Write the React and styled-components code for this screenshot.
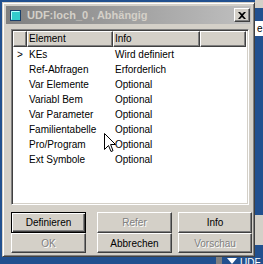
import React from 'react';
import styled, { createGlobalStyle } from 'styled-components';

const Global = createGlobalStyle`
  html, body { margin: 0; padding: 0; }
  body {
    width: 263px; height: 264px; overflow: hidden;
    background: #21508f;
    font-family: "Liberation Sans", Arial, sans-serif;
    font-size: 10px;
  }
`;

const Desktop = styled.div`
  position: relative;
  width: 263px;
  height: 264px;
  overflow: hidden;
  background: #21508f;
`;

const BackWindow = styled.div`
  position: absolute;
  left: ${p => p.x}px;
  top: ${p => p.y}px;
  width: ${p => p.w}px;
  height: ${p => p.h}px;
  background: ${p => p.bg};
  color: ${p => p.fg || '#000'};
  font-size: 10px;
  line-height: ${p => p.h}px;
  padding-left: 2px;
  box-sizing: border-box;
  overflow: hidden;
  white-space: nowrap;
`;

const TaskItem = styled.div`
  position: absolute;
  left: 227px;
  top: 258px;
  display: flex;
  align-items: flex-start;
  gap: 3px;
  color: #ffffff;
  font-size: 10px;
  line-height: 10px;
  white-space: nowrap;
`;

const Window = styled.div`
  position: absolute;
  left: 2px;
  top: 2px;
  width: 253px;
  height: 255px;
  box-sizing: border-box;
  background: #d4d0c8;
  border: 1px solid;
  border-color: #d4d0c8 #404040 #404040 #d4d0c8;
  box-shadow: inset 1px 1px 0 #ffffff, inset -1px -1px 0 #808080;
  padding: 3px;
  display: flex;
  flex-direction: column;
`;

const TitleBar = styled.div`
  height: 18px;
  flex: none;
  display: flex;
  align-items: center;
  padding: 0 1px 0 4px;
  background: linear-gradient(to right, #808080, #c0c0c0);
  color: #d4d0c8;
  font-weight: bold;
  font-size: 11px;
`;

const TitleText = styled.span`
  margin-left: 6px;
  flex: 1;
  white-space: nowrap;
`;

const CloseButton = styled.div`
  width: 16px;
  height: 14px;
  box-sizing: border-box;
  background: #d4d0c8;
  border: 1px solid;
  border-color: #ffffff #404040 #404040 #ffffff;
  box-shadow: inset -1px -1px 0 #808080;
  display: flex;
  align-items: center;
  justify-content: center;
`;

const ListBox = styled.div`
  margin: 5px 0 0 5px;
  width: 238px;
  height: 176px;
  box-sizing: border-box;
  background: #ffffff;
  border: 1px solid;
  border-color: #808080 #ffffff #ffffff #808080;
  box-shadow: inset 1px 1px 0 #404040, inset -1px -1px 0 #d4d0c8;
  padding: 1px;
  display: flex;
  flex-direction: column;
  overflow: hidden;
`;

const HeaderRow = styled.div`
  display: grid;
  grid-template-columns: 14px 86px 87px 46px;
  height: 16px;
  flex: none;
`;

const HeaderCell = styled.div`
  box-sizing: border-box;
  background: #d4d0c8;
  border: 1px solid;
  border-color: #ffffff #404040 #404040 #ffffff;
  box-shadow: inset -1px -1px 0 #808080;
  padding-left: 1px;
  line-height: 14px;
  color: #000;
  white-space: nowrap;
  overflow: hidden;
`;

const Row = styled.div`
  display: grid;
  grid-template-columns: 14px 86px 87px 1fr;
  height: 15px;
  line-height: 15px;
  color: #000;
  white-space: nowrap;
`;

const Cell = styled.div`
  padding-left: ${p => (p.marker ? 4 : 2)}px;
  overflow: hidden;
`;

const ButtonGrid = styled.div`
  margin: 7px 0 0 5px;
  display: grid;
  grid-template-columns: 86px 81px 75px;
  grid-auto-rows: 21px 20px;
`;

const Button = styled.div`
  width: ${p => (p.last ? 74 : 75)}px;
  box-sizing: border-box;
  background: #d4d0c8;
  color: ${p => (p.disabled ? '#808080' : '#000')};
  text-shadow: ${p => (p.disabled ? '1px 1px 0 #ffffff' : 'none')};
  border: 1px solid;
  border-color: ${p => (p.isDefault ? '#000 #000 #000 #000' : '#ffffff #404040 #404040 #ffffff')};
  box-shadow: ${p =>
    p.isDefault
      ? 'inset 1px 1px 0 #ffffff, inset -1px -1px 0 #404040, inset -2px -2px 0 #808080'
      : 'inset -1px -1px 0 #808080'};
  display: flex;
  align-items: center;
  justify-content: center;
  font-size: 10px;
`;

const Cursor = styled.svg`
  position: absolute;
  left: 104px;
  top: 133px;
  pointer-events: none;
`;

const rows = [
  ['>', 'KEs', 'Wird definiert'],
  ['', 'Ref-Abfragen', 'Erforderlich'],
  ['', 'Var Elemente', 'Optional'],
  ['', 'Variabl Bem', 'Optional'],
  ['', 'Var Parameter', 'Optional'],
  ['', 'Familientabelle', 'Optional'],
  ['', 'Pro/Program', 'Optional'],
  ['', 'Ext Symbole', 'Optional'],
];

const buttons = [
  { label: 'Definieren', isDefault: true },
  { label: 'Refer', disabled: true },
  { label: 'Info', last: true },
  { label: 'OK', disabled: true },
  { label: 'Abbrechen' },
  { label: 'Vorschau', disabled: true, last: true },
];

export default function App() {
  return (
    <Desktop>
      <Global />
      <BackWindow x={255} y={0} w={8} h={8} bg="#d4d0c8" />
      <BackWindow x={255} y={21} w={8} h={15} bg="#ffffff">e</BackWindow>
      <BackWindow x={255} y={215} w={8} h={30} bg="#d4d0c8" />
      <BackWindow x={216} y={257} w={6} h={7} bg="#808080" />
      <TaskItem>
        <svg width="10" height="6" viewBox="0 0 10 6">
          <path d="M0 0 H10 L5 6 Z" fill="#ffffff" />
        </svg>
        <span>UDF</span>
      </TaskItem>
      <Window>
        <TitleBar>
          <svg width="11" height="11" viewBox="0 0 11 11">
            <rect x="0.5" y="0.5" width="10" height="10" fill="#33cccc" stroke="#1a3f6a" />
            <path d="M1.5 9.5 V1.5 H9.5" fill="none" stroke="#b8ffff" />
          </svg>
          <TitleText>UDF:loch_0 , Abhängig</TitleText>
          <CloseButton>
            <svg width="8" height="7" viewBox="0 0 8 7">
              <path d="M0 0 L2 0 L4 2 L6 0 L8 0 L5 3.5 L8 7 L6 7 L4 5 L2 7 L0 7 L3 3.5 Z" fill="#000" />
            </svg>
          </CloseButton>
        </TitleBar>
        <ListBox>
          <HeaderRow>
            <HeaderCell />
            <HeaderCell>Element</HeaderCell>
            <HeaderCell>Info</HeaderCell>
            <HeaderCell />
          </HeaderRow>
          {rows.map(([m, e, i]) => (
            <Row key={e}>
              <Cell marker>{m}</Cell>
              <Cell>{e}</Cell>
              <Cell>{i}</Cell>
              <Cell />
            </Row>
          ))}
        </ListBox>
        <ButtonGrid>
          {buttons.map(b => (
            <Button key={b.label} disabled={b.disabled} isDefault={b.isDefault} last={b.last}>
              {b.label}
            </Button>
          ))}
        </ButtonGrid>
      </Window>
      <Cursor width="12" height="20" viewBox="0 0 12 20">
        <path d="M0.5 0.5 L0.5 16.5 L4.5 12.5 L7 18.5 L9 17.7 L6.6 11.5 L11.5 11.5 Z" fill="#fff" stroke="#000" strokeWidth="1" />
      </Cursor>
    </Desktop>
  );
}
